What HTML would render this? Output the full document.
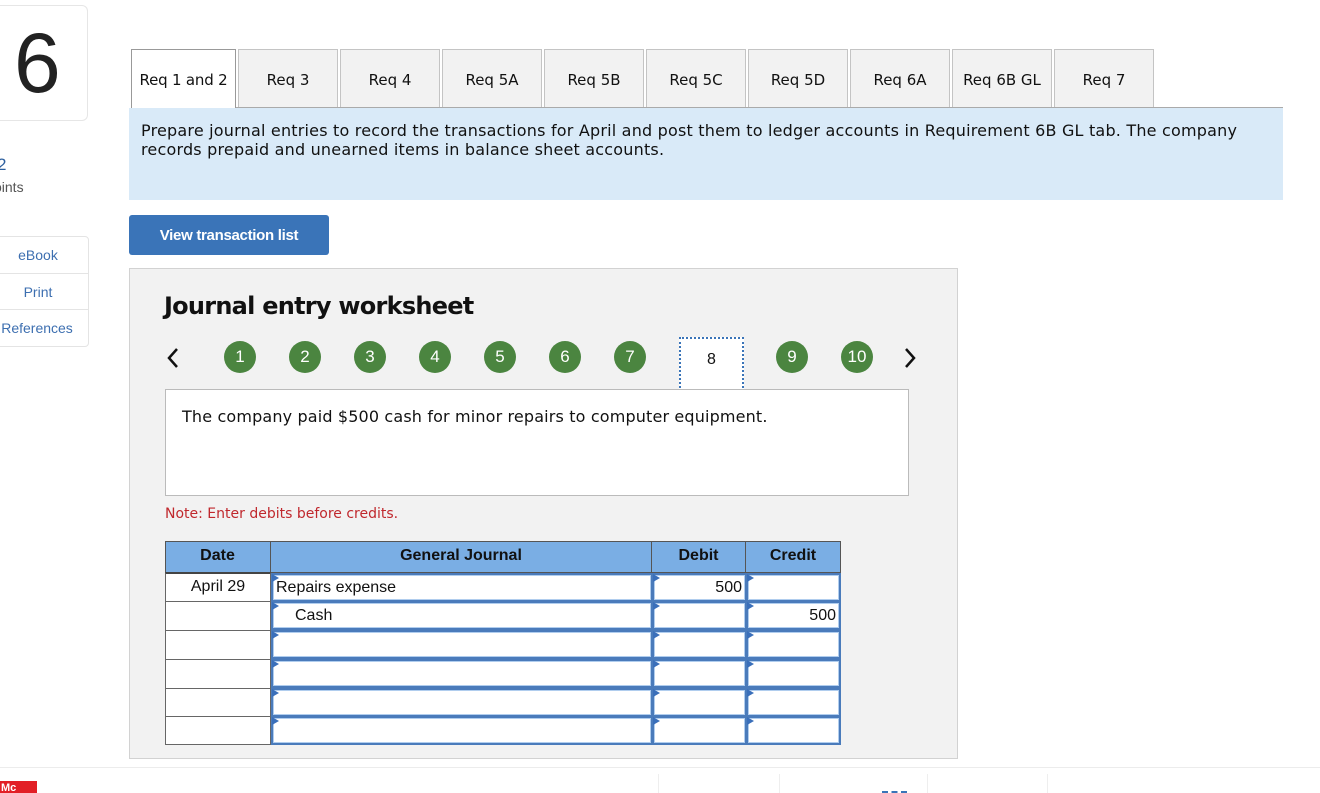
<!DOCTYPE html>
<html><head><meta charset="utf-8"><style>
*{margin:0;padding:0;box-sizing:border-box}
body{width:1320px;height:793px;position:relative;overflow:hidden;background:#fff;font-family:"DejaVu Sans","Liberation Sans",sans-serif;color:#111}
.a{position:absolute}
.tab{position:absolute;top:49px;height:58px;width:100px;background:#f2f2f2;border:1px solid #c4c4c4;border-bottom:none;font-family:"DejaVu Sans",sans-serif;font-size:15px;text-align:center;line-height:60px;letter-spacing:0}
.c{position:absolute;top:341px;width:32px;height:32px;border-radius:50%;background:#4b8540;color:#fff;font:17px "Liberation Sans",sans-serif;text-align:center;line-height:32px}
.side{position:absolute;left:-1px;width:90px;border:1px solid #e4e4e4;color:#3d6fb0;font:14px "Liberation Sans",sans-serif;text-align:center;padding-right:12px}
.cell{position:absolute;background:#4a7bbb}
.cell i{position:absolute;left:2px;top:2px;right:2px;bottom:2px;background:#fff;border:1px solid #b0cdee;font:16px "Liberation Sans",sans-serif;font-style:normal;line-height:24px}
.cell b{position:absolute;left:1px;top:1px;width:0;height:0;border-top:4px solid transparent;border-bottom:4px solid transparent;border-left:7px solid #3a6fba}
.dt{position:absolute;left:165px;width:106px;height:29px;border:1px solid #666;border-bottom:none;background:#fff;font:16px "Liberation Sans",sans-serif;text-align:center;line-height:26px}
.hd{position:absolute;top:541px;height:32px;text-align:center;font:bold 16px 'Liberation Sans',sans-serif;line-height:30px}
</style></head><body>
<div class="a" style="left:0;top:5px;width:88px;height:116px;border:1px solid #e6e6e6;border-left:none;border-radius:0 6px 6px 0"></div>
<div class="a" style="left:14px;top:18px;font:84px 'Liberation Sans',sans-serif;line-height:90px;color:#222">6</div>
<div class="a" style="left:-3px;top:155px;font:17px 'Liberation Sans',sans-serif;color:#2d5f9e">2</div>
<div class="a" style="left:-6px;top:179px;font:14px 'Liberation Sans',sans-serif;color:#555">oints</div>
<div class="side" style="top:236px;height:38px;line-height:36px;border-radius:0 4px 0 0">eBook</div>
<div class="side" style="top:273px;height:37px;line-height:37px">Print</div>
<div class="side" style="top:309px;height:38px;line-height:36px;border-radius:0 0 4px 0;padding-right:14px">References</div>

<div class="tab" style="left:131px;width:105px;background:#fff;border-color:#999;height:59px;letter-spacing:-0.2px">Req 1 and 2</div>
<div class="tab" style="left:238px">Req 3</div>
<div class="tab" style="left:340px">Req 4</div>
<div class="tab" style="left:442px">Req 5A</div>
<div class="tab" style="left:544px">Req 5B</div>
<div class="tab" style="left:646px">Req 5C</div>
<div class="tab" style="left:748px">Req 5D</div>
<div class="tab" style="left:850px">Req 6A</div>
<div class="tab" style="left:952px">Req 6B GL</div>
<div class="tab" style="left:1054px">Req 7</div>
<div class="a" style="left:236px;top:107px;width:1047px;height:1px;background:#aaa"></div>
<div class="a" style="left:129px;top:108px;width:1154px;height:92px;background:#d9eaf8;padding:13px 12px;font-size:16px;line-height:19px;letter-spacing:0.2px">Prepare journal entries to record the transactions for April and post them to ledger accounts in Requirement 6B GL tab. The company records prepaid and unearned items in balance sheet accounts.</div>
<div class="a" style="left:129px;top:215px;width:200px;height:40px;background:#3a74b8;border-radius:3px;color:#fff;font:bold 15px 'Liberation Sans',sans-serif;text-align:center;line-height:42px;letter-spacing:-0.3px">View transaction list</div>

<div class="a" style="left:129px;top:268px;width:829px;height:491px;background:#f2f2f2;border:1px solid #d2d2d2"></div>
<div class="a" style="left:164px;top:292px;font:bold 24px 'DejaVu Sans',sans-serif;letter-spacing:-0.75px">Journal entry worksheet</div>
<svg class="a" style="left:166px;top:347px" width="14" height="22"><path d="M11 2 L3 11 L11 20" stroke="#111" stroke-width="2.5" fill="none"/></svg>
<svg class="a" style="left:903px;top:347px" width="14" height="22"><path d="M3 2 L11 11 L3 20" stroke="#111" stroke-width="2.5" fill="none"/></svg>
<div class="c" style="left:224px">1</div><div class="c" style="left:289px">2</div><div class="c" style="left:354px">3</div><div class="c" style="left:419px">4</div><div class="c" style="left:484px">5</div><div class="c" style="left:549px">6</div><div class="c" style="left:614px">7</div>
<div class="a" style="left:679px;top:337px;width:65px;height:55px;background:#fff;border:2px dotted #3a74b8;font:16px 'Liberation Sans',sans-serif;text-align:center;line-height:42px">8</div>
<div class="c" style="left:776px">9</div><div class="c" style="left:841px">10</div>
<div class="a" style="left:165px;top:389px;width:744px;height:107px;background:#fff;border:1px solid #bbb;padding:17px 16px;font-size:16px;letter-spacing:0.15px">The company paid $500 cash for minor repairs to computer equipment.</div>
<div class="a" style="left:165px;top:506px;font-size:14px;color:#c0282d;letter-spacing:0">Note: Enter debits before credits.</div>

<div class="a" style="left:165px;top:541px;width:676px;height:32px;background:#7aaee4;border:1px solid #555"></div>
<div class="hd" style="left:165px;width:106px;border-right:1px solid #555">Date</div>
<div class="hd" style="left:271px;width:381px;border-right:1px solid #555">General Journal</div>
<div class="hd" style="left:652px;width:94px;border-right:1px solid #555">Debit</div>
<div class="hd" style="left:746px;width:94px">Credit</div>

<div class="dt" style="top:572px;border-top:2px solid #444">April 29</div>
<div class="dt" style="top:601px"></div>
<div class="dt" style="top:630px"></div>
<div class="dt" style="top:659px"></div>
<div class="dt" style="top:688px"></div>
<div class="dt" style="top:716px;border-bottom:1px solid #666"></div>

<div class="cell" style="left:271px;top:573px;width:382px;height:29px"><i style="padding-left:2px">Repairs expense</i><b></b></div>
<div class="cell" style="left:652px;top:573px;width:95px;height:29px"><i style="text-align:right;padding-right:2px">500</i><b></b></div>
<div class="cell" style="left:746px;top:573px;width:95px;height:29px"><i></i><b></b></div>
<div class="cell" style="left:271px;top:601px;width:382px;height:29px"><i style="padding-left:21px">Cash</i><b></b></div>
<div class="cell" style="left:652px;top:601px;width:95px;height:29px"><i></i><b></b></div>
<div class="cell" style="left:746px;top:601px;width:95px;height:29px"><i style="text-align:right;padding-right:2px">500</i><b></b></div>
<div class="cell" style="left:271px;top:630px;width:382px;height:29px"><i></i><b></b></div>
<div class="cell" style="left:652px;top:630px;width:95px;height:29px"><i></i><b></b></div>
<div class="cell" style="left:746px;top:630px;width:95px;height:29px"><i></i><b></b></div>
<div class="cell" style="left:271px;top:659px;width:382px;height:29px"><i></i><b></b></div>
<div class="cell" style="left:652px;top:659px;width:95px;height:29px"><i></i><b></b></div>
<div class="cell" style="left:746px;top:659px;width:95px;height:29px"><i></i><b></b></div>
<div class="cell" style="left:271px;top:688px;width:382px;height:29px"><i></i><b></b></div>
<div class="cell" style="left:652px;top:688px;width:95px;height:29px"><i></i><b></b></div>
<div class="cell" style="left:746px;top:688px;width:95px;height:29px"><i></i><b></b></div>
<div class="cell" style="left:271px;top:716px;width:382px;height:29px"><i></i><b></b></div>
<div class="cell" style="left:652px;top:716px;width:95px;height:29px"><i></i><b></b></div>
<div class="cell" style="left:746px;top:716px;width:95px;height:29px"><i></i><b></b></div>

<div class="a" style="left:0;top:767px;width:1320px;height:1px;background:#ececec"></div>
<div class="a" style="left:658px;top:774px;width:1px;height:19px;background:#eee"></div>
<div class="a" style="left:779px;top:774px;width:1px;height:19px;background:#eee"></div>
<div class="a" style="left:927px;top:774px;width:1px;height:19px;background:#eee"></div>
<div class="a" style="left:1047px;top:774px;width:1px;height:19px;background:#eee"></div>
<div class="a" style="left:882px;top:791px;width:25px;height:2px;border-top:2px dashed #3a74b8"></div>
<div class="a" style="left:0;top:781px;width:37px;height:12px;background:#e21f26;color:#fff;font:bold 11px 'Liberation Sans',sans-serif;padding-left:1px;line-height:14px;overflow:hidden">Mc</div>
</body></html>
